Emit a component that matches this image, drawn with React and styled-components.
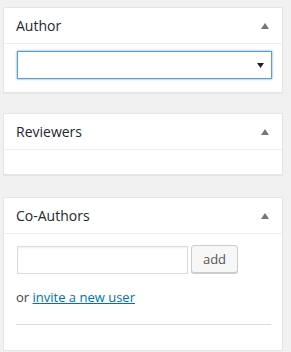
import styled, { createGlobalStyle } from "styled-components";

const GlobalStyle = createGlobalStyle`
  html, body {
    margin: 0;
    padding: 0;
    background: #f1f1f1;
  }
  body {
    font-family: "Open Sans", "Liberation Sans", sans-serif;
    font-size: 13px;
    color: #444;
  }
`;

function ToggleArrow() {
  return (
    <svg width="8" height="6" viewBox="0 0 8 6">
      <path d="M4 0 L8 6 L0 6 Z" fill="#72777c" />
    </svg>
  );
}

function SelectArrow() {
  return (
    <svg width="7" height="5" viewBox="0 0 7 5">
      <path d="M0 0 L7 0 L3.5 5 Z" fill="#222" />
    </svg>
  );
}

export default function App() {
  return (
    <>
      <GlobalStyle />
      <Sidebar>
        <Postbox>
          <Header>
            <Title>Author</Title>
            <ToggleArrow />
          </Header>
          <Inside $top={7} $bottom={13}>
            <Select>
              <SelectArrow />
            </Select>
          </Inside>
        </Postbox>

        <Postbox $gap={22}>
          <Header>
            <Title>Reviewers</Title>
            <ToggleArrow />
          </Header>
          <Inside $top={0} $bottom={24} />
        </Postbox>

        <Postbox $gap={0}>
          <Header>
            <Title>Co-Authors</Title>
            <ToggleArrow />
          </Header>
          <Inside $top={11} $bottom={25}>
            <AddRow>
              <TextInput type="text" />
              <Button>add</Button>
            </AddRow>
            <Invite>
              or <a href="#">invite a new user</a>
            </Invite>
            <Divider />
          </Inside>
        </Postbox>
      </Sidebar>
    </>
  );
}

const Sidebar = styled.div`
padding: 7px 0 0 3px;
width: 280px;
`
const Postbox = styled.div`
background: #fff;
border: 1px solid #e5e5e5;
box-shadow: 0 1px 1px rgba(0, 0, 0, 0.04);
margin-bottom: ${p => p.$gap ?? 20}px;
`
const Header = styled.div`
display: flex;
align-items: center;
justify-content: space-between;
height: 35px;
padding: 0 13px 0 12px;
border-bottom: 1px solid #eee;
box-sizing: content-box;
svg{
    margin-top: 1px;
}
`
const Title = styled.h2`
margin: 0;
font-size: 14px;
font-weight: 400;
line-height: 19px;
color: #23282d;
`
const Inside = styled.div`
padding: ${p => p.$top}px 10px ${p => p.$bottom}px 12px;
`
const Select = styled.div`
box-sizing: border-box;
margin-left: 1px;
width: 255px;
height: 28px;
border: 1px solid #5b9dd9;
box-shadow: 0 0 2px rgba(30, 140, 190, 0.8);
background: #fff;
display: flex;
align-items: center;
justify-content: flex-end;
padding-right: 7px;
`
const AddRow = styled.div`
display: flex;
align-items: center;
gap: 3px;
margin-left: 1px;
`
const TextInput = styled.input`
box-sizing: border-box;
width: 171px;
height: 28px;
margin: 0;
border: 1px solid #ddd;
box-shadow: inset 0 1px 2px rgba(0, 0, 0, 0.07);
background: #fff;
outline: none;
`
const Button = styled.button`
box-sizing: border-box;
width: 47px;
height: 28px;
margin: 0 0 1px 0;
padding: 0;
border: 1px solid #ccc;
border-radius: 3px;
background: #f7f7f7;
box-shadow: 0 1px 0 #ccc;
color: #555;
font-family: "Open Sans", "Liberation Sans", sans-serif;
font-size: 13px;
`
const Invite = styled.p`
margin: 13px 0 0 0;
line-height: 20px;
font-size: 13px;
color: #444;
a{
    color: #0073aa;
    text-decoration: underline;
}
`
const Divider = styled.div`
margin-top: 17px;
width: 255px;
height: 1px;
background: #ddd;
`
